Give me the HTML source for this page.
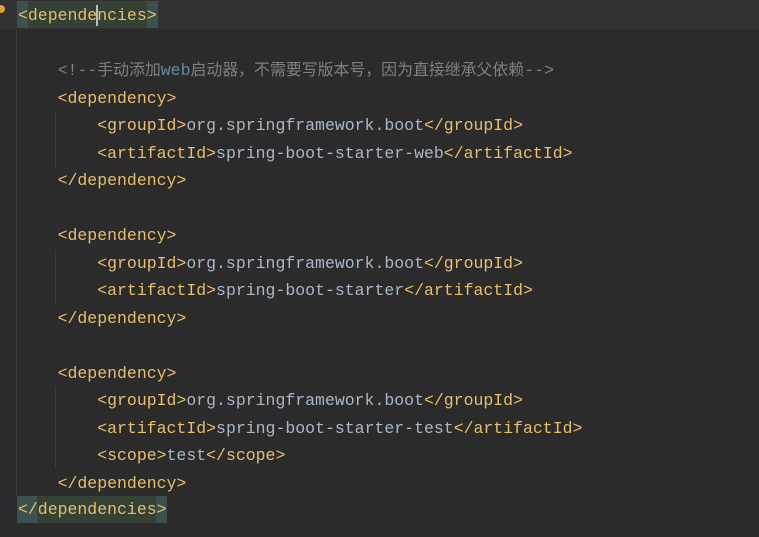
<!DOCTYPE html>
<html><head><meta charset="utf-8"><style>
body{margin:0;width:759px;height:537px;background:#2b2b2b;overflow:hidden;position:relative;font-family:"Liberation Mono","Noto Sans CJK SC",monospace;font-size:16.5px;}
.cur{position:absolute;left:0;top:0;width:759px;height:29px;background:#323232}
.l{position:absolute;left:18px;height:27.5px;line-height:27.5px;white-space:pre;color:#a9b7c6}
.t{color:#e8bf6a}.c{color:#808080}.w{color:#6a87a6}
.z{font-size:15.9px}
.g{position:absolute;width:1px;background:#3a3a3a}
.hb{position:absolute;background:#3b514d;height:27px}
.hi{position:absolute;background:#344134;height:27px}
</style></head><body>
<div class="cur"></div>
<div style="position:absolute;left:0;top:5px;width:5px;height:8px;background:#e0a030;border-radius:0 4px 4px 0"></div>
<div class="g" style="left:16px;top:29px;height:466px"></div>
<div class="g" style="left:55px;top:112px;height:55px"></div>
<div class="g" style="left:55px;top:250px;height:55px"></div>
<div class="g" style="left:55px;top:387px;height:81px"></div>
<div class="hb" style="left:17px;top:1px;width:141px"></div>
<div class="hi" style="left:28px;top:1px;width:119px"></div>
<div class="hb" style="left:17px;top:496px;width:150px"></div>
<div class="hi" style="left:37px;top:496px;width:119px"></div>
<div style="position:absolute;left:96px;top:5px;width:2px;height:21px;background:#bbb"></div>
<div class="l t" style="top:2px">&lt;dependencies&gt;</div>
<div class="l c" style="top:57px">    &lt;!--<span class="z">手动添加</span><span class="w">web</span><span class="z">启动器，不需要写版本号，因为直接继承父依赖</span>--&gt;</div>
<div class="l" style="top:85px"><span class="t">    &lt;dependency&gt;</span></div>
<div class="l" style="top:112px"><span class="t">        &lt;groupId&gt;</span>org.springframework.boot<span class="t">&lt;/groupId&gt;</span></div>
<div class="l" style="top:140px"><span class="t">        &lt;artifactId&gt;</span>spring-boot-starter-web<span class="t">&lt;/artifactId&gt;</span></div>
<div class="l t" style="top:167px">    &lt;/dependency&gt;</div>
<div class="l t" style="top:222px">    &lt;dependency&gt;</div>
<div class="l" style="top:250px"><span class="t">        &lt;groupId&gt;</span>org.springframework.boot<span class="t">&lt;/groupId&gt;</span></div>
<div class="l" style="top:277px"><span class="t">        &lt;artifactId&gt;</span>spring-boot-starter<span class="t">&lt;/artifactId&gt;</span></div>
<div class="l t" style="top:305px">    &lt;/dependency&gt;</div>
<div class="l t" style="top:360px">    &lt;dependency&gt;</div>
<div class="l" style="top:387px"><span class="t">        &lt;groupId&gt;</span>org.springframework.boot<span class="t">&lt;/groupId&gt;</span></div>
<div class="l" style="top:415px"><span class="t">        &lt;artifactId&gt;</span>spring-boot-starter-test<span class="t">&lt;/artifactId&gt;</span></div>
<div class="l" style="top:442px"><span class="t">        &lt;scope&gt;</span>test<span class="t">&lt;/scope&gt;</span></div>
<div class="l t" style="top:470px">    &lt;/dependency&gt;</div>
<div class="l t" style="top:496px">&lt;/dependencies&gt;</div>
</body></html>
